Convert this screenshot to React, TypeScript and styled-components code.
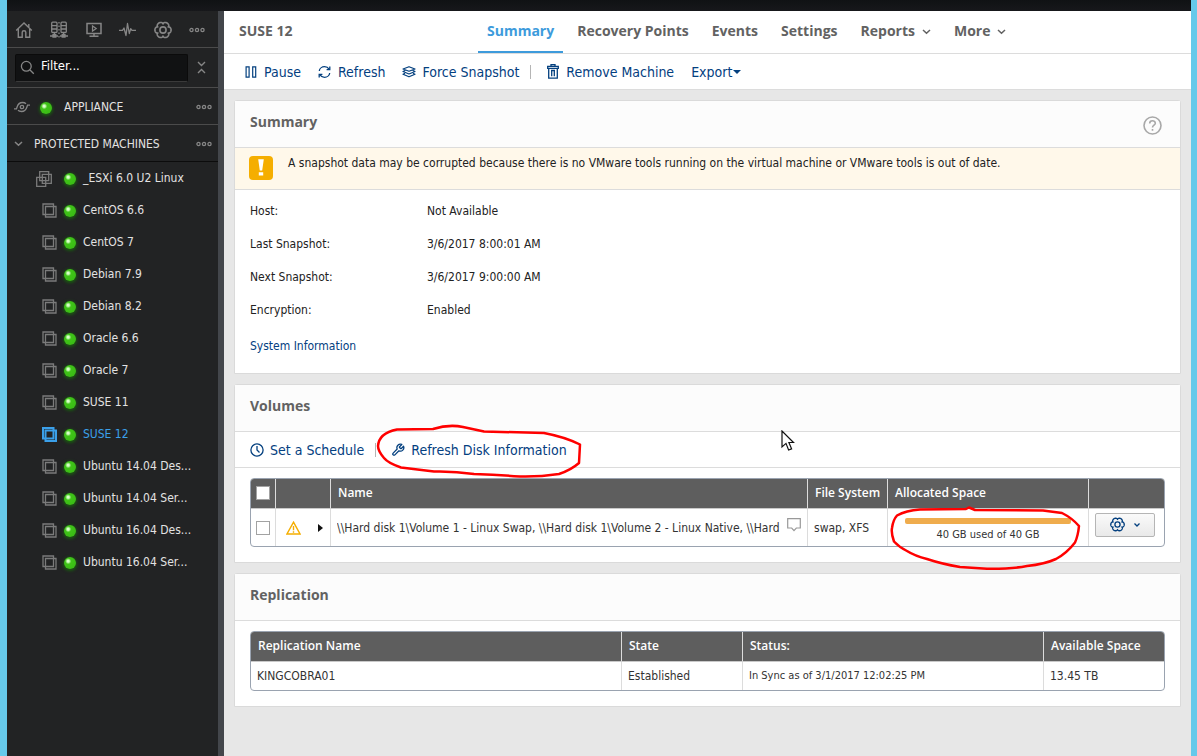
import React from "react";
import styled, { createGlobalStyle, css } from "styled-components";

const GlobalStyle = createGlobalStyle`
  *, *::before, *::after { box-sizing: border-box; }
  html, body, #root { height: 100%; }
  body {
    margin: 0;
    font-family: "DejaVu Sans Condensed", "Noto Sans", sans-serif;
    font-size: 12px;
    line-height: 16px;
    color: #222;
    background: #66c9ea;
  }
  button, input { font: inherit; color: inherit; }
  a { text-decoration: none; color: inherit; }
  svg { display: block; flex: none; }
`;

const navy = "#04407f";
const headingFont = '"Open Sans", "Noto Sans", sans-serif';

const Frame = styled.div`
  display: flex;
  flex-direction: column;
  min-height: 100%;
  padding: 0 6px 0 7px;
`;
const TopStrip = styled.div`
  height: 11px;
  background: linear-gradient(#101214, #17181b);
`;
const Body = styled.div`
  display: flex;
  flex: 1;
`;

const Sidebar = styled.aside`
  flex: 0 0 217px;
  background: #222324;
  border-right: 6px solid #43464b;
  color: #e2e2e2;
`;
const IconBar = styled.nav`
  display: flex;
  align-items: center;
  justify-content: space-between;
  height: 37px;
  padding: 1px 13px 0 8px;
  border-bottom: 1px solid #4b4b4b;
`;
const IconButton = styled.button`
  display: flex;
  padding: 0;
  border: 0;
  background: none;
  color: #868686;
`;
const FilterRow = styled.div`
  display: flex;
  align-items: center;
  gap: 9px;
  height: 39px;
  padding: 0 12px 0 8px;
`;
const FilterBox = styled.label`
  display: flex;
  align-items: center;
  gap: 6px;
  flex: 1;
  min-width: 0;
  height: 28px;
  padding-left: 4px;
  border: 1px solid #0b0b0b;
  border-bottom-color: #3a3a3a;
  border-radius: 2px;
  background: #111213;
  color: #868686;
`;
const FilterInput = styled.input`
  width: 100%;
  min-width: 0;
  padding: 0 0 3px;
  border: 0;
  outline: 0;
  background: none;
  color: #fff;
  font-size: 13px;
  &::placeholder { color: #fff; opacity: 1; }
`;
const GroupRow = styled.div`
  display: flex;
  align-items: center;
  height: 37px;
  padding: 2px 6px 0 7px;
  border-top: 1px solid #4b4b4b;
  color: #868686;
`;
const GroupLabel = styled.a`
  flex: 1;
  margin-left: 11px;
  color: #e2e2e2;
`;
const MachineList = styled.ul`
  margin: 0;
  padding: 0;
  border-top: 1px solid #0c0c0c;
  list-style: none;
`;
const Machine = styled.a<{ $active?: boolean }>`
  display: flex;
  align-items: center;
  height: 32px;
  padding: 0 12px 0 29px;
  color: ${(p) => (p.$active ? "#3ba0ea" : "#e2e2e2")};
  svg {
    color: ${(p) => (p.$active ? "#3ba0ea" : "#7b7b7b")};
    stroke-width: ${(p) => (p.$active ? 2 : 1.3)};
  }
`;
const MachineGlyph = styled.span<{ $group?: boolean }>`
  display: flex;
  flex: 0 0 21px;
  justify-content: ${(p) => (p.$group ? "flex-start" : "flex-end")};
  padding-top: 1px;
`;
const MachineName = styled.span`
  margin-left: 6px;
  white-space: nowrap;
`;
const Dot = styled.i<{ $before?: number }>`
  flex: none;
  width: 12px;
  height: 12px;
  margin: 2px 1px 0 ${(p) => p.$before || 7}px;
  border-radius: 50%;
  background: radial-gradient(circle at 35% 35%, #d8ffc8 0 1px, #3fc318 3px, #38b814 100%);
  box-shadow: 0 1px 3px 1px #1a5a10;
`;

const Main = styled.main`
  flex: 1;
  min-width: 0;
  background: #e7e7e7;
`;
const Header = styled.header`
  display: flex;
  height: 43px;
  padding-left: 15px;
  background: #fff;
  border-bottom: 1px solid #dcdcdc;
  color: #626262;
`;
const headingText = css`
  margin: 0;
  font-family: ${headingFont};
  font-size: 14px;
  line-height: 20px;
  font-weight: 700;
`;
const Title = styled.h1`
  ${headingText}
  flex: 0 0 239px;
  padding-top: 10px;
`;
const Tabs = styled.nav`
  display: flex;
  gap: 5px;
`;
const Tab = styled.a<{ $active?: boolean }>`
  ${headingText}
  display: flex;
  gap: 7px;
  padding: 10px 9px 0;
  white-space: nowrap;
  svg { margin-top: 8px; }
  ${(p) => p.$active && css`
    color: #3d9bdc;
    border-bottom: 2px solid #3d9bdc;
  `}
`;
const Toolbar = styled.div<{ $inPanel?: boolean }>`
  display: flex;
  align-items: center;
  gap: 17px;
  height: 36px;
  padding-left: ${(p) => (p.$inPanel ? 15 : 20)}px;
  background: #fff;
  border-bottom: 1px solid #dcdcdc;
`;
const Action = styled.button<{ $tight?: boolean }>`
  position: relative;
  display: flex;
  align-items: center;
  gap: ${(p) => (p.$tight ? 1 : 6)}px;
  padding: 0;
  border: 0;
  background: none;
  color: ${navy};
  font-size: 14px;
  line-height: 18px;
  white-space: nowrap;
`;
const ActionIcon = styled.span`
  display: flex;
  flex: 0 0 14px;
  justify-content: center;
`;
const Divider = styled.span`
  width: 1px;
  height: 14px;
  margin: 0 -2px 0 -6px;
  background: #b5b5b5;
`;

const Content = styled.div`
  display: flex;
  flex-direction: column;
  gap: 10px;
  padding: 10px;
`;
const Panel = styled.section`
  position: relative;
  background: #fff;
  border: 1px solid #dadada;
  border-radius: 3px 3px 0 0;
`;
const PanelHead = styled.div`
  display: flex;
  justify-content: space-between;
  height: 47px;
  padding: 11px 18px 0 15px;
  background: #fcfcfc;
  border-bottom: 1px solid #dcdcdc;
  color: #626262;
`;
const PanelTitle = styled.h2`
  ${headingText}
`;
const Help = styled.button`
  height: 19px;
  margin-top: 4px;
  padding: 0;
  border: 0;
  background: none;
  color: #a8a8a8;
`;
const Warning = styled.div`
  display: flex;
  gap: 15px;
  height: 42px;
  padding: 8px 14px;
  background: #fff8ea;
  border-bottom: 1px solid #dcdcdc;
`;
const WarningText = styled.p`
  margin: -1px 0 0;
`;
const Details = styled.dl`
  display: grid;
  grid-template-columns: 177px 1fr;
  row-gap: 17px;
  margin: 0;
  padding: 13px 15px 0;
`;
const Term = styled.dt``;
const Value = styled.dd`
  margin: 0;
`;
const InfoLink = styled.a`
  display: inline-block;
  margin: 20px 15px 19px;
  color: ${navy};
`;

const TableArea = styled.div`
  padding: 10px 15px 15px;
`;
const Table = styled.table`
  width: 100%;
  table-layout: fixed;
  border-collapse: separate;
  border-spacing: 0;
  border: 1px solid #9aa3b0;
  border-radius: 4px;
`;
const Th = styled.th`
  height: 30px;
  padding: 0 7px 2px;
  text-align: left;
  font-family: ${headingFont};
  font-weight: 600;
  white-space: nowrap;
  color: #fff;
  background: #5e5e5e;
  border-right: 1px solid #dcdcdc;
  border-bottom: 1px solid #c9c9c9;
  &:first-child { border-top-left-radius: 3px; }
  &:last-child { border-right: 0; border-top-right-radius: 3px; }
`;
const Td = styled.td<{ $tall?: boolean; $small?: boolean }>`
  position: relative;
  height: ${(p) => (p.$tall ? 37 : 28)}px;
  padding: 0 6px;
  font-size: ${(p) => (p.$small ? 11 : 12)}px;
  white-space: nowrap;
  color: #333;
  border-right: 1px solid #dcdcdc;
  &:last-child { border-right: 0; }
`;
const Check = styled.input`
  display: block;
  appearance: none;
  width: 14px;
  height: 14px;
  margin: 0;
  background: #fff;
  border: 1px solid #a2a2a2;
  th & { margin-left: -2px; }
  td & { margin-left: -1px; }
`;
const CellRow = styled.div<{ $gap: number; $indent?: number }>`
  display: flex;
  align-items: center;
  gap: ${(p) => p.$gap}px;
  padding-left: ${(p) => p.$indent || 0}px;
`;
const Clip = styled.span`
  overflow: hidden;
  min-width: 0;
  flex: 1;
`;
const NoteMark = styled.span`
  padding-bottom: 6px;
`;
const Usage = styled.div`
  padding: 5px 11px 0;
  text-align: center;
  font-size: 11px;
`;
const UsageBar = styled.div`
  height: 6px;
  margin-bottom: 3px;
  border-radius: 2px;
  background: #efac4d;
`;
const GearButton = styled.button`
  display: flex;
  align-items: center;
  justify-content: center;
  gap: 9px;
  width: 60px;
  height: 24px;
  margin-bottom: 6px;
  padding: 0;
  border: 1px solid #b5b5b5;
  border-radius: 2px;
  background: linear-gradient(#fafafa, #e9e9e9);
  color: ${navy};
`;
const Marker = styled.svg<{ $x: number; $y: number }>`
  position: absolute;
  z-index: 2;
  left: ${(p) => p.$x}px;
  top: ${(p) => p.$y}px;
  pointer-events: none;
`;
const Pointer = styled.svg`
  position: absolute;
  left: 546px;
  top: 45px;
  pointer-events: none;
`;

const line = { fill: "none", stroke: "currentColor" } as const;

const HomeIcon = () => (
  <svg width="18" height="18" viewBox="0 0 18 18" {...line} strokeWidth="1.4">
    <path d="M1.2 9.4 9 2l7.8 7.4M3.3 8v8.3h3.9v-5.1c0-.8.7-1.4 1.8-1.4s1.8.6 1.8 1.4v5.1h3.9V8M13.800 3v3" />
  </svg>
);
const ServersIcon = () => (
  <svg width="18" height="18" viewBox="0 0 18 18" {...line} strokeWidth="1.3">
    <rect x="1.700" y="1.200" width="5.300" height="10.300" rx="1" />
    <rect x="11" y="1.200" width="5.300" height="10.300" rx="1" />
    <path d="M1.700 4.600H7M1.700 8H7M11 4.600h5.300M11 8h5.300M4.400 11.500v3M13.600 11.500v3M0 15h8M10 15h8M3 13.600h2.800v2.600H3zM12.200 13.600H15v2.600h-2.800z" />
    <path d="M9 1v16" strokeDasharray="1.500 2" />
  </svg>
);
const ScreenIcon = () => (
  <svg width="16" height="16" viewBox="0 0 16 16" {...line} strokeWidth="1.5">
    <path d="M1 1.600h14v9.800H1zM8 11.400v2.800M3.500 14.300h9" />
    <path d="M6.500 4v5L10.200 6.500z" strokeWidth="1.200" />
  </svg>
);
const PulseIcon = () => (
  <svg width="17" height="16" viewBox="0 0 17 16" {...line} strokeWidth="1.3" strokeLinejoin="round">
    <path d="M0 8.400h3.500L5 6l2 7.500L8.500 1.500l1.800 10L11.700 6.600l1.300 1.800h4" />
  </svg>
);

// Six rounded lobes sampled around the centre of an 18-unit box.
const cogPath =
  "M" +
  Array.from({ length: 96 }, (_, i) => {
    const a = (i / 96) * Math.PI * 2;
    const r = 6 + 2.1 * Math.sqrt(Math.abs(Math.cos(3 * a)));
    return `${(9 + r * Math.cos(a)).toFixed(2)} ${(9 + r * Math.sin(a)).toFixed(2)}`;
  }).join("L") +
  "Z";
const GearIcon = ({ size = 18 }: { size?: number }) => (
  <svg width={size} height={size} viewBox="0 0 18 18" {...line} strokeWidth="1.600" strokeLinejoin="round">
    <path d={cogPath} />
    <circle cx="9" cy="9" r="3.100" />
  </svg>
);
const MoreDots = () => (
  <svg width="16" height="6" viewBox="0 0 16 6" {...line} strokeWidth="1.3">
    <circle cx="2.500" cy="3" r="1.600" />
    <circle cx="8" cy="3" r="1.600" />
    <circle cx="13.500" cy="3" r="1.600" />
  </svg>
);
const SearchIcon = () => (
  <svg width="15" height="15" viewBox="0 0 15 15" {...line} strokeWidth="1.300">
    <circle cx="6.300" cy="6.300" r="4.900" />
    <path d="m10 10 3.800 3.800" />
  </svg>
);
const CollapseIcon = () => (
  <svg width="9" height="13" viewBox="0 0 9 13" {...line} strokeWidth="1.400">
    <path d="m1 1 3.500 3.500L8 1M1 12l3.500-3.500L8 12" />
  </svg>
);
const ApplianceIcon = () => (
  <svg width="16" height="12" viewBox="0 0 16 12" {...line} strokeWidth="1.300">
    <circle cx="8" cy="6" r="1.700" />
    <path d="M0 7.800h2.500C3.300 6 3.300 1.500 8.500 1.500c1.600 0 2.700.5 3.500 1.300M16 4.200h-2.500C12.700 6 12.700 10.500 7.500 10.500c-1.600 0-2.700-.5-3.500-1.300" />
  </svg>
);
const Chevron = () => (
  <svg width="9" height="6" viewBox="0 0 9 6" {...line} strokeWidth="1.500">
    <path d="m1 1 3.500 3.300L8 1" />
  </svg>
);
const MachineIcon = () => (
  <svg width="15" height="15" viewBox="0 0 15 15" {...line}>
    <path d="M1 1h10.500v10.500H1zM3.500 3.500H14V14H3.500z" />
  </svg>
);
const ClusterIcon = () => (
  <svg width="16" height="16" viewBox="0 0 16 16" {...line}>
    <path d="M3.700.700h9v9h-9zM6.300 3.300h9v9h-9zM.7 6.300h9v9h-9z" />
  </svg>
);
const PauseIcon = () => (
  <svg width="12" height="12" viewBox="0 0 12 12" {...line} strokeWidth="1.200">
    <path d="M1.100.800h3v10.400h-3zM7.700.800h3v10.400h-3z" />
  </svg>
);
const RefreshIcon = () => (
  <svg width="13" height="14" viewBox="0 0 13 14" {...line} strokeWidth="1.300">
    <path d="M1.300 6C1.500 3.500 4 1.700 6.500 1.700c2 0 3.700 1 4.700 2.600M11.700 8c-.2 2.500-2.700 4.300-5.200 4.300-2 0-3.700-1-4.700-2.600" />
    <path d="M11.800 1.500v3.200H8.600M1.200 12.500V9.300h3.200" />
  </svg>
);
const LayersIcon = () => (
  <svg width="14" height="12" viewBox="0 0 14 12" {...line} strokeWidth="1.200" strokeLinejoin="round">
    <path d="M7 .700 13 3 7 5.300 1 3zM3 4.500 1 5.500l6 2.500 6-2.500-2-1M3 7.200l-2 1 6 2.600 6-2.600-2-1" />
  </svg>
);
const TrashIcon = () => (
  <svg width="12" height="15" viewBox="0 0 12 15" {...line} strokeWidth="1.300">
    <path d="M.7 2.300h10.600v2H.7zM4 2.300V.700h4v1.600M1.700 4.300v9.900h8.600V4.300M4 6.500h4M4.700 6.500v5.800M7.300 6.500v5.800" />
  </svg>
);
const Caret = () => (
  <svg width="8" height="4" viewBox="0 0 8 4" fill="currentColor">
    <path d="M0 0h8L4 4z" />
  </svg>
);
const ClockIcon = () => (
  <svg width="14" height="14" viewBox="0 0 14 14" {...line} strokeWidth="1.300">
    <circle cx="7" cy="7" r="6.100" />
    <path d="M7 3v4l2.500 2.500" />
  </svg>
);
const WrenchIcon = () => (
  <svg width="14" height="14" viewBox="0 0 24 24" {...line} strokeWidth="2.200" strokeLinejoin="round">
    <path d="M14.700 6.300a1 1 0 0 0 0 1.400l1.600 1.600a1 1 0 0 0 1.400 0l3.800-3.800a6 6 0 0 1-7.900 7.900l-6.900 6.900a2.100 2.100 0 0 1-3-3l6.900-6.900a6 6 0 0 1 7.900-7.900z" />
  </svg>
);
const HelpIcon = () => (
  <svg width="19" height="19" viewBox="0 0 19 19" {...line} strokeWidth="1.600">
    <circle cx="9.500" cy="9.500" r="8.500" />
    <path d="M6.700 7.400c0-3.600 5.600-3.400 5.600-.2 0 2-2.800 2.100-2.800 4.300M9.500 13v1.700" />
  </svg>
);
const AlertIcon = () => (
  <svg width="24" height="24" viewBox="0 0 24 24">
    <rect width="24" height="24" rx="4" fill="#f5ae00" />
    <path d="M9.200 3.200h5.600l-1.600 11.300h-2.400zM9.800 16.300h4.400v3.200H9.800z" fill="#fff" />
  </svg>
);
const TriangleIcon = () => (
  <svg width="15" height="14" viewBox="0 0 15 14" fill="none" stroke="#f5ae00" strokeWidth="1.400">
    <path d="M7.500 1.200 14 13H1zM7.500 5v4.300M7.500 10.300v1.400" />
  </svg>
);
const ExpandIcon = () => (
  <svg width="5" height="8" viewBox="0 0 5 8" fill="#111">
    <path d="M0 0v8l5-4z" />
  </svg>
);
const CommentIcon = () => (
  <svg width="14" height="14" viewBox="0 0 14 14" fill="none" stroke="#999" strokeWidth="1.200">
    <path d="M.7.700h12.600v9.300H9.300L7 12.600 4.700 10h-4z" />
  </svg>
);
const MiniChevron = () => (
  <svg width="6" height="4" viewBox="0 0 6 4" {...line} strokeWidth="1.300">
    <path d="m.5.500 2.500 2.500L5.500.500" />
  </svg>
);

const machines = [
  "CentOS 6.6", "CentOS 7", "Debian 7.9", "Debian 8.2", "Oracle 6.6", "Oracle 7",
  "SUSE 11", "SUSE 12", "Ubuntu 14.04 Des...", "Ubuntu 14.04 Ser...",
  "Ubuntu 16.04 Des...", "Ubuntu 16.04 Ser...",
];
const details = [
  ["Host:", "Not Available"],
  ["Last Snapshot:", "3/6/2017 8:00:01 AM"],
  ["Next Snapshot:", "3/6/2017 9:00:00 AM"],
  ["Encryption:", "Enabled"],
];
const shortcuts = [
  { name: "Home", icon: <HomeIcon /> },
  { name: "Replicated machines", icon: <ServersIcon /> },
  { name: "Virtual standby", icon: <ScreenIcon /> },
  { name: "Events", icon: <PulseIcon /> },
  { name: "Settings", icon: <GearIcon /> },
  { name: "More", icon: <MoreDots /> },
];

function SideNav() {
  return (
    <Sidebar>
      <IconBar>
        {shortcuts.map((s) => (
          <IconButton key={s.name} aria-label={s.name}>{s.icon}</IconButton>
        ))}
      </IconBar>
      <FilterRow>
        <FilterBox>
          <SearchIcon />
          <FilterInput type="text" placeholder="Filter..." aria-label="Filter" />
        </FilterBox>
        <IconButton aria-label="Collapse all"><CollapseIcon /></IconButton>
      </FilterRow>
      <GroupRow>
        <ApplianceIcon />
        <Dot $before={10} />
        <GroupLabel href="#appliance">APPLIANCE</GroupLabel>
        <IconButton aria-label="Appliance menu"><MoreDots /></IconButton>
      </GroupRow>
      <GroupRow>
        <Chevron />
        <GroupLabel href="#machines">PROTECTED MACHINES</GroupLabel>
        <IconButton aria-label="Protected machines menu"><MoreDots /></IconButton>
      </GroupRow>
      <MachineList>
        <li>
          <Machine href="#esxi">
            <MachineGlyph $group><ClusterIcon /></MachineGlyph>
            <Dot />
            <MachineName>_ESXi 6.0 U2 Linux</MachineName>
          </Machine>
        </li>
        {machines.map((m) => (
          <li key={m}>
            <Machine href="#machine" $active={m === "SUSE 12"}>
              <MachineGlyph><MachineIcon /></MachineGlyph>
              <Dot />
              <MachineName>{m}</MachineName>
            </Machine>
          </li>
        ))}
      </MachineList>
    </Sidebar>
  );
}

function Volumes() {
  return (
    <Panel>
      <PanelHead><PanelTitle>Volumes</PanelTitle></PanelHead>
      <Toolbar $inPanel>
        <Action><ActionIcon><ClockIcon /></ActionIcon>Set a Schedule</Action>
        <Divider />
        <Action>
          <ActionIcon><WrenchIcon /></ActionIcon>Refresh Disk Information
          <Marker $x={-15} $y={-17} width="208" height="56" viewBox="377 424 208 56" fill="none" stroke="#f00" strokeWidth="2.500" strokeLinejoin="round">
            <path d="M398 429.500 434 429Q450 424 464 427L485 431.500 545 433Q566 437 581 444.500L580 463Q572 470 560 474Q540 477 521 476.500Q500 475 475 474Q455 471 435 471.500L402 467.500Q389 463 385 458Q379 451 379 446 380 433 398 429.500Z" />
          </Marker>
        </Action>
      </Toolbar>
      <TableArea>
        <Table>
          <colgroup>
            <col width="25" />
            <col width="55" />
            <col />
            <col width="80" />
            <col width="201" />
            <col width="75" />
          </colgroup>
          <thead>
            <tr>
              <Th><Check type="checkbox" aria-label="Select all volumes" /></Th>
              <Th />
              <Th>Name</Th>
              <Th>File System</Th>
              <Th>Allocated Space</Th>
              <Th />
            </tr>
          </thead>
          <tbody>
            <tr>
              <Td $tall><Check type="checkbox" aria-label="Select volume" /></Td>
              <Td><CellRow $gap={17} $indent={4}><TriangleIcon /><ExpandIcon /></CellRow></Td>
              <Td>
                <CellRow $gap={4}>
                  <Clip>{"\\\\Hard disk 1\\Volume 1 - Linux Swap, \\\\Hard disk 1\\Volume 2 - Linux Native, \\\\Hard"}</Clip>
                  <NoteMark><CommentIcon /></NoteMark>
                </CellRow>
              </Td>
              <Td>swap, XFS</Td>
              <Td>
                <Usage><UsageBar />40 GB used of 40 GB</Usage>
                <Marker $x={2} $y={-4} width="192" height="66" viewBox="890 504 192 66" fill="none" stroke="#f00" strokeWidth="2.500" strokeLinejoin="round">
                  <path d="M897 514.500Q906 509.500 920 508.500L966 508 969 506.500 975 509 1043 509.500 1062 512Q1072 517 1079 525Q1078 535 1075 541.500Q1067 552 1056 558Q1045 563 1027 565Q1012 568 987 567.700L960 566Q942 563 927 558Q915 555 907 550Q899 546 894 540.500Q891 532 892 527Q893 519 897 514.500Z" />
                </Marker>
              </Td>
              <Td>
                <GearButton aria-label="Volume actions"><GearIcon size={15} /><MiniChevron /></GearButton>
              </Td>
            </tr>
          </tbody>
        </Table>
      </TableArea>
      <Pointer width="14" height="22" viewBox="0 0 14 22">
        <path d="M1 1v16l4-3.600L7.600 20l3-1.200-2.700-6.300H12.500z" fill="#fff" stroke="#111" strokeWidth="1.200" />
      </Pointer>
    </Panel>
  );
}

function Replication() {
  return (
    <Panel>
      <PanelHead><PanelTitle>Replication</PanelTitle></PanelHead>
      <TableArea>
        <Table>
          <colgroup>
            <col />
            <col width="121" />
            <col width="301" />
            <col width="120" />
          </colgroup>
          <thead>
            <tr>
              <Th>Replication Name</Th>
              <Th>State</Th>
              <Th>Status:</Th>
              <Th>Available Space</Th>
            </tr>
          </thead>
          <tbody>
            <tr>
              <Td>KINGCOBRA01</Td>
              <Td>Established</Td>
              <Td $small>In Sync as of 3/1/2017 12:02:25 PM</Td>
              <Td>13.45 TB</Td>
            </tr>
          </tbody>
        </Table>
      </TableArea>
    </Panel>
  );
}

export default function App() {
  return (
    <Frame>
      <GlobalStyle />
      <TopStrip />
      <Body>
        <SideNav />
        <Main>
          <Header>
            <Title>SUSE 12</Title>
            <Tabs>
              <Tab href="#summary" $active>Summary</Tab>
              <Tab href="#recovery">Recovery Points</Tab>
              <Tab href="#events">Events</Tab>
              <Tab href="#settings">Settings</Tab>
              <Tab href="#reports">Reports<Chevron /></Tab>
              <Tab href="#more">More<Chevron /></Tab>
            </Tabs>
          </Header>
          <Toolbar>
            <Action><ActionIcon><PauseIcon /></ActionIcon>Pause</Action>
            <Action><ActionIcon><RefreshIcon /></ActionIcon>Refresh</Action>
            <Action><ActionIcon><LayersIcon /></ActionIcon>Force Snapshot</Action>
            <Divider />
            <Action><ActionIcon><TrashIcon /></ActionIcon>Remove Machine</Action>
            <Action $tight>Export<Caret /></Action>
          </Toolbar>
          <Content>
            <Panel>
              <PanelHead>
                <PanelTitle>Summary</PanelTitle>
                <Help aria-label="Help"><HelpIcon /></Help>
              </PanelHead>
              <Warning>
                <AlertIcon />
                <WarningText>
                  A snapshot data may be corrupted because there is no VMware tools running on the virtual machine or VMware tools is out of date.
                </WarningText>
              </Warning>
              <Details>
                {details.map(([k, v]) => (
                  <React.Fragment key={k}>
                    <Term>{k}</Term>
                    <Value>{v}</Value>
                  </React.Fragment>
                ))}
              </Details>
              <InfoLink href="#system">System Information</InfoLink>
            </Panel>
            <Volumes />
            <Replication />
          </Content>
        </Main>
      </Body>
    </Frame>
  );
}
